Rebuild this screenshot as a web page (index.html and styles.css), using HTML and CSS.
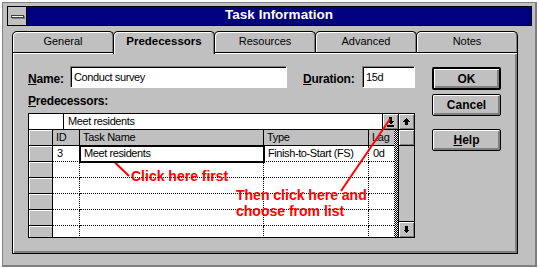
FILE: index.html
```html
<!DOCTYPE html>
<html lang="en">
<head>
  <meta charset="UTF-8" />
  <meta name="viewport" content="width=device-width, initial-scale=1.0" />
  <title>Task Information</title>
  <link rel="stylesheet" href="styles.css">
</head>
<body>
  <div class="window">
    <div class="titlebar">
      <div class="sysbox"><div class="sysbar"></div></div>
      <div class="caption">Task Information</div>
    </div>

    <div class="tabs">
      <div class="tab">General</div>
      <div class="tab active">Predecessors</div>
      <div class="tab">Resources</div>
      <div class="tab">Advanced</div>
      <div class="tab">Notes</div>
    </div>

    <div class="panel">
      <div class="main">
        <div class="name-row">
          <label class="lbl lbl-name"><u>N</u>ame:</label>
          <div class="field field-name">Conduct survey</div>
          <label class="lbl lbl-dur"><u>D</u>uration:</label>
          <div class="field field-dur">15d</div>
        </div>

        <div class="pred-label"><u>P</u>redecessors:</div>

        <div class="grid">
          <div class="grid-left">
            <div class="edit-row">
              <div class="edit-blank"></div>
              <div class="edit-text">Meet residents</div>
              <div class="drop-btn">
                <svg width="7" height="10" viewBox="0 0 7 10" shape-rendering="crispEdges">
                  <rect x="2" y="0" width="3" height="4" fill="#000"/>
                  <polygon points="0,4 7,4 3.5,7.5" fill="#000"/>
                  <rect x="0" y="8" width="7" height="2" fill="#000"/>
                </svg>
              </div>
            </div>
            <div class="grid-body">
              <div class="sheet">
                <div class="rh"></div><div class="hd">ID</div><div class="hd">Task Name</div><div class="hd">Type</div><div class="hd">Lag</div>
                <div class="rh"></div><div class="cell">3</div><div class="cell sel">Meet residents</div><div class="cell">Finish-to-Start (FS)</div><div class="cell">0d</div>
                <div class="rh"></div><div class="cell"></div><div class="cell"></div><div class="cell"></div><div class="cell"></div>
                <div class="rh"></div><div class="cell"></div><div class="cell"></div><div class="cell"></div><div class="cell"></div>
                <div class="rh"></div><div class="cell"></div><div class="cell"></div><div class="cell"></div><div class="cell"></div>
                <div class="rh"></div><div class="cell"></div><div class="cell"></div><div class="cell"></div><div class="cell"></div>
                <div class="rh"></div><div class="cell"></div><div class="cell"></div><div class="cell"></div><div class="cell"></div>
              </div>
              <div class="splitter"></div>
            </div>
          </div>
          <div class="vscroll">
            <div class="sbtn up">
              <svg width="7" height="7" viewBox="0 0 7 7" shape-rendering="crispEdges">
                <polygon points="3.5,0 7,3.5 0,3.5" fill="#000"/>
                <rect x="2" y="3" width="3" height="4" fill="#000"/>
              </svg>
            </div>
            <div class="thumb"></div>
            <div class="trough"></div>
            <div class="sbtn down">
              <svg width="7" height="7" viewBox="0 0 7 7" shape-rendering="crispEdges">
                <rect x="2" y="0" width="3" height="4" fill="#000"/>
                <polygon points="0,3.5 7,3.5 3.5,7" fill="#000"/>
              </svg>
            </div>
          </div>
        </div>
      </div>

      <div class="side">
        <button class="btn default">OK</button>
        <button class="btn cancel">Cancel</button>
        <button class="btn help"><u>H</u>elp</button>
      </div>
    </div>
  </div>

  <svg class="marks" width="539" height="268" viewBox="0 0 539 268">
    <line x1="104" y1="152" x2="129" y2="176" />
    <line x1="390" y1="119" x2="341" y2="191" />
  </svg>
  <div class="note note-first">Click here first</div>
  <div class="note note-then">Then click here and<br>choose from list</div>
</body>
</html>
```

FILE: styles.css
```css
* {
  box-sizing: border-box;
}
body {
  margin: 0;
  background: #fff;
  font-family: "Liberation Sans", Arial, sans-serif;
  font-size: 11px;
  color: #000;
}

.window {
  width: 535px;
  height: 265px;
  margin: 2px 0 0 2px;
  padding: 3px 3px 0 4px;
  background: #c0c0c0;
  border-left: 1px solid #808080;
  border-top: 1px solid #808080;
  border-right: 2px solid #808080;
  border-bottom: 2px solid #808080;
}

/* title bar */
.titlebar {
  display: flex;
  height: 20px;
  border: 1px solid #000;
}
.sysbox {
  width: 19px;
  border-right: 1px solid #000;
  background: #c0c0c0;
  display: flex;
  align-items: center;
  justify-content: center;
}
.sysbar {
  width: 13px;
  height: 3px;
  background: #fff;
  border: 1px solid #404040;
  box-shadow: 1px 1px 0 #808080;
}
.caption {
  flex: 1;
  background: #000080;
  color: #fff;
  font-weight: bold;
  font-size: 13.5px;
  line-height: 16px;
  text-align: center;
}

/* tabs */
.tabs {
  display: flex;
  height: 21px;
  margin: 5px 0 0 5px;
}
.tab {
  width: 102px;
  height: 21px;
  border: 1px solid #000;
  border-bottom: none;
  border-radius: 5px 5px 0 0;
  background: #c0c0c0;
  box-shadow: inset 1px 1px 0 #fff, inset -1px 0 0 #808080;
  text-align: center;
  line-height: 19px;
  font-size: 11px;
}
.tab + .tab {
  margin-left: -1px;
}
.tab.active {
  position: relative;
  z-index: 1;
  height: 23px;
  font-weight: bold;
  font-size: 11.5px;
}

/* page */
.panel {
  display: flex;
  gap: 17px;
  width: 506px;
  height: 202px;
  margin-left: 5px;
  padding: 13px 0 0 15px;
  background: #c0c0c0;
  border: 1px solid #000;
  box-shadow: inset 1px 1px 0 #fff, inset -2px -2px 0 #808080;
}
.main {
  width: 387px;
}
.name-row {
  display: flex;
  align-items: center;
  height: 22px;
}
.lbl {
  font-weight: bold;
  font-size: 12px;
  padding-top: 3px;
  letter-spacing: -0.2px;
}
.lbl-name {
  width: 42px;
}
.lbl-dur {
  width: 59px;
  margin-left: 16px;
}
.field {
  height: 22px;
  background: #fff;
  border-top: 1px solid #808080;
  border-left: 1px solid #808080;
  border-right: 1px solid #fff;
  border-bottom: 1px solid #fff;
  box-shadow: inset 1px 1px 0 #000;
  padding-left: 3px;
  line-height: 20px;
  letter-spacing: -0.4px;
}
.field-name {
  width: 217px;
}
.field-dur {
  width: 53px;
}
.pred-label {
  margin-top: 6px;
  font-weight: bold;
  font-size: 12px;
  line-height: 14px;
  letter-spacing: -0.2px;
}

/* predecessor sheet */
.grid {
  display: flex;
  width: 387px;
  height: 125px;
  margin-top: 5px;
  border: 1px solid #000;
  background: #fff;
}
.grid-left {
  width: 369px;
  display: flex;
  flex-direction: column;
}
.edit-row {
  display: flex;
  height: 16px;
  border-bottom: 1px solid #000;
}
.edit-blank {
  width: 35px;
  border-right: 1px solid #000;
}
.edit-text {
  flex: 1;
  padding-left: 4px;
  line-height: 15px;
  letter-spacing: -0.4px;
}
.drop-btn {
  width: 16px;
  border-left: 1px solid #000;
  background: #c0c0c0;
  box-shadow: inset 1px 1px 0 #fff, inset -1px -1px 0 #808080;
  display: flex;
  align-items: center;
  justify-content: center;
}
.grid-body {
  display: flex;
  height: 107px;
}
.sheet {
  width: 365px;
  height: 107px;
  overflow: hidden;
  display: grid;
  grid-template-columns: 24px 27px 184px 105px 25px;
  grid-auto-rows: 16px;
}
.rh {
  background: #c0c0c0;
  border-right: 1px solid #000;
  border-bottom: 1px solid #000;
  box-shadow: inset 1px 1px 0 #fff;
}
.hd {
  background: #c0c0c0;
  border-right: 1px solid #000;
  border-bottom: 1px solid #000;
  padding-left: 3px;
  line-height: 15px;
  letter-spacing: -0.3px;
}
.cell {
  background: #fff;
  border-right: 1px dotted #000;
  border-bottom: 1px dotted #000;
  padding-left: 4px;
  line-height: 15px;
  white-space: nowrap;
  letter-spacing: -0.4px;
}
.sheet > :nth-child(5n) {
  border-right: none;
}
.cell.sel {
  position: relative;
  z-index: 1;
  outline: 2px solid #000;
  outline-offset: -1px;
}
.splitter {
  width: 4px;
  background: repeating-conic-gradient(#000 0 25%, #fff 0 50%) 0 0 / 2px 2px;
}

/* scroll bar */
.vscroll {
  width: 16px;
  border-left: 1px solid #000;
  background: #c0c0c0;
  display: flex;
  flex-direction: column;
}
.sbtn,
.thumb {
  height: 16px;
  background: #c0c0c0;
  box-shadow: inset 1px 1px 0 #fff, inset -1px -1px 0 #808080;
  display: flex;
  align-items: center;
  justify-content: center;
}
.sbtn.up,
.thumb {
  border-bottom: 1px solid #000;
}
.sbtn.down {
  border-top: 1px solid #000;
}
.trough {
  flex: 1;
}

/* buttons */
.side {
  width: 69px;
  padding-top: 1px;
  display: flex;
  flex-direction: column;
}
.btn {
  height: 22px;
  padding: 0;
  font-family: "Liberation Sans", Arial, sans-serif;
  font-weight: bold;
  font-size: 12px;
  color: #000;
  background: #c0c0c0;
  border: 1px solid #000;
  border-radius: 2px;
  box-shadow: inset 1px 1px 0 #fff, inset -2px -2px 0 #808080;
}
.btn.default {
  height: 23px;
  border-width: 2px;
}
.btn.cancel {
  margin-top: 4px;
}
.btn.help {
  margin-top: 13px;
}

/* red annotations */
.marks {
  position: absolute;
  left: 0;
  top: 0;
  pointer-events: none;
}
.marks line {
  stroke: #f00;
  stroke-width: 2;
}
.note {
  position: absolute;
  color: #f00;
  font-weight: bold;
  font-size: 14px;
  line-height: 16px;
  white-space: nowrap;
}
.note-first {
  left: 131px;
  top: 168px;
}
.note-then {
  left: 236px;
  top: 187px;
}
```
